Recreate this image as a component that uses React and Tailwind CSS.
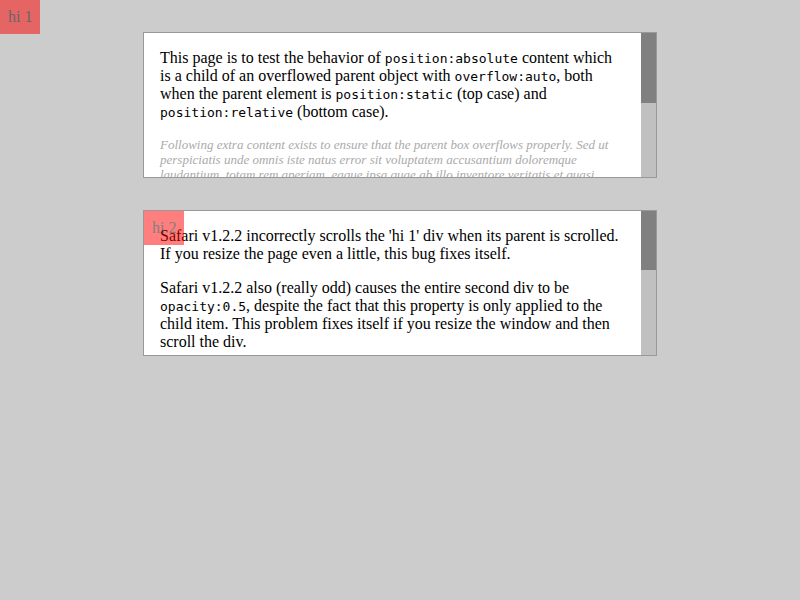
const Code = ({ children }) => (
    <code className="font-['DejaVu_Sans_Mono',monospace] text-[13px] leading-none">{children}</code>
);

const HiBox = ({ label }) => (
    <div className="absolute left-0 top-0 p-2 bg-[#ff0000] text-black opacity-50 leading-[18px]">{label}</div>
);

const Scrollbar = ({ thumb }) => (
    <div className="w-[15px] shrink-0 bg-[#c0c0c0]">
        <div className="bg-[#808080]" style={{ height: thumb }}></div>
    </div>
);

export default function App() {
    return (
        <div className="relative min-h-screen bg-[#cccccc] pt-8 font-['Liberation_Serif',serif] text-[16px] text-black">
            <HiBox label="hi 1" />

            <div className="mx-auto flex w-[514px] h-[146px] border border-[#999999] bg-white">
                <div className="flex-1 overflow-hidden p-4">
                    <p className="leading-[18px]">
                        This page is to test the behavior of <Code>position:absolute</Code> content which is a child of an overflowed parent object with <Code>overflow:auto</Code>, both when the parent element is <Code>position:static</Code> (top case) and <Code>position:relative</Code> (bottom case).
                    </p>
                    <p className="mt-4 italic text-[13px] leading-[15px] text-[#aaaaaa]">
                        Following extra content exists to ensure that the parent box overflows properly. Sed ut perspiciatis unde omnis iste natus error sit voluptatem accusantium doloremque laudantium, totam rem aperiam, eaque ipsa quae ab illo inventore veritatis et quasi architecto beatae vitae dicta sunt explicabo. Nemo enim ipsam voluptatem quia voluptas sit aspernatur aut odit aut fugit.
                    </p>
                </div>
                <Scrollbar thumb={70} />
            </div>

            <div className="relative mx-auto mt-8 flex w-[514px] h-[146px] border border-[#999999] bg-white">
                <div className="flex-1 overflow-hidden p-4 leading-[18px]">
                    <p>Safari v1.2.2 incorrectly scrolls the 'hi 1' div when its parent is scrolled. If you resize the page even a little, this bug fixes itself.</p>
                    <p className="mt-4">
                        Safari v1.2.2 also (really odd) causes the entire second div to be <Code>opacity:0.5</Code>, despite the fact that this property is only applied to the child item. This problem fixes itself if you resize the window and then scroll the div.
                    </p>
                </div>
                <Scrollbar thumb={59} />
                <HiBox label="hi 2" />
            </div>
        </div>
    );
}
